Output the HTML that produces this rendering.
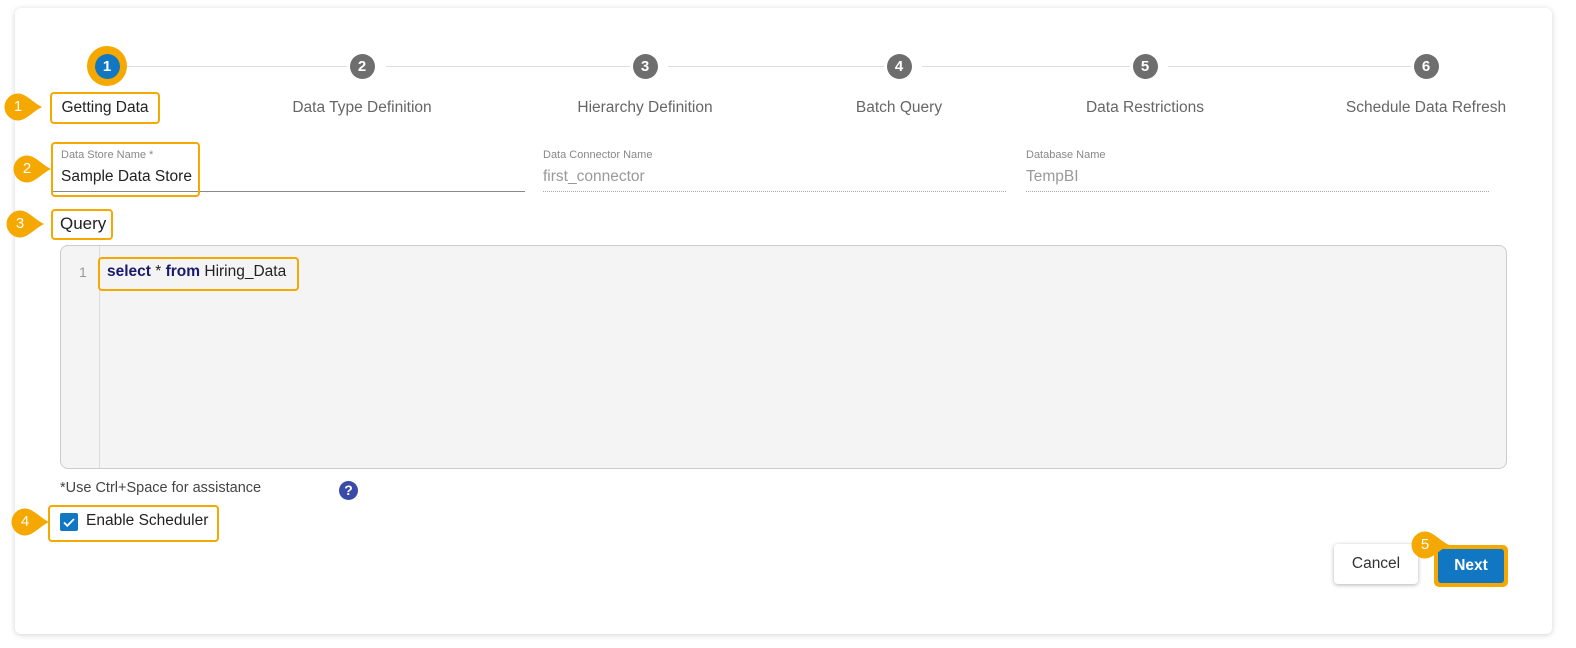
<!DOCTYPE html>
<html><head><style>
*{box-sizing:border-box;margin:0;padding:0}
body{width:1576px;height:648px;background:#fff;font-family:"Liberation Sans",sans-serif;position:relative;overflow:hidden;color:#333}
.card{position:absolute;left:15px;top:8px;width:1537px;height:626px;background:#fff;border-radius:6px;box-shadow:0 1px 6px rgba(0,0,0,.18)}
.a{position:absolute}
.circ{position:absolute;width:25px;height:25px;border-radius:50%;background:#6e6e6e;color:#fff;font-size:15px;font-weight:bold;text-align:center;line-height:25px}
.line{position:absolute;height:1px;background:#ddd;top:66px}
.lbl{position:absolute;top:99px;font-size:15.5px;color:#666;transform:translateX(-50%);white-space:nowrap}
.ob{position:absolute;border:2px solid #f5a800;border-radius:4px}
.bd{position:absolute;width:44px;height:28px}
.bt{position:absolute;width:28px;height:28px;color:#fff;font-size:15px;text-align:center;line-height:28px}
.fl{position:absolute;font-size:11px;color:#888}
.fv{position:absolute;font-size:15.5px}
</style></head><body>
<div class="card"></div>

<div class="line" style="left:122px;width:225px"></div>
<div class="line" style="left:386px;width:244px"></div>
<div class="line" style="left:668px;width:216px"></div>
<div class="line" style="left:922px;width:208px"></div>
<div class="line" style="left:1168px;width:243px"></div>

<div class="a" style="left:87px;top:46px;width:40px;height:40px;border-radius:50%;background:#f5a800"></div>
<div class="circ" style="left:94.5px;top:53.5px;background:#1277c3">1</div>
<div class="circ" style="left:349.5px;top:53.5px">2</div>
<div class="circ" style="left:632.5px;top:53.5px">3</div>
<div class="circ" style="left:886.5px;top:53.5px">4</div>
<div class="circ" style="left:1132.5px;top:53.5px">5</div>
<div class="circ" style="left:1413.5px;top:53.5px">6</div>

<div class="lbl" style="left:105px;color:#222">Getting Data</div>
<div class="lbl" style="left:362px">Data Type Definition</div>
<div class="lbl" style="left:645px">Hierarchy Definition</div>
<div class="lbl" style="left:899px">Batch Query</div>
<div class="lbl" style="left:1145px">Data Restrictions</div>
<div class="lbl" style="left:1426px">Schedule Data Refresh</div>
<div class="ob" style="left:50px;top:92px;width:110px;height:32px"></div>

<div class="fl" style="left:61px;top:149px">Data Store Name *</div>
<div class="fv" style="left:61px;top:168px;color:#222">Sample Data Store</div>
<div class="a" style="left:52px;top:191px;width:473px;height:1px;background:#888"></div>
<div class="ob" style="left:51px;top:142px;width:149px;height:55px"></div>

<div class="fl" style="left:543px;top:149px">Data Connector Name</div>
<div class="fv" style="left:543px;top:168px;color:#999">first_connector</div>
<div class="a" style="left:543px;top:191px;width:463px;border-top:1px dotted #aaa"></div>

<div class="fl" style="left:1026px;top:149px">Database Name</div>
<div class="fv" style="left:1026px;top:168px;color:#999">TempBI</div>
<div class="a" style="left:1026px;top:191px;width:463px;border-top:1px dotted #aaa"></div>

<div class="a" style="left:60px;top:214px;font-size:17px;color:#222">Query</div>
<div class="ob" style="left:51px;top:209px;width:62px;height:31px"></div>

<div class="a" style="left:60px;top:245px;width:1447px;height:224px;background:#f4f4f4;border:1px solid #ccc;border-radius:8px"></div>
<div class="a" style="left:99px;top:246px;width:1px;height:222px;background:#ddd"></div>
<div class="a" style="left:79px;top:264px;font-size:14px;color:#999">1</div>
<div class="a" style="left:107px;top:263px;font-size:15.5px;color:#222"><b style="color:#1a1a6e">select</b> * <b style="color:#1a1a6e">from</b> Hiring_Data</div>
<div class="ob" style="left:98px;top:257px;width:201px;height:34px"></div>

<div class="a" style="left:60px;top:480px;font-size:14.5px;color:#444">*Use Ctrl+Space for assistance</div>
<div class="a" style="left:339px;top:481px;width:19px;height:19px;border-radius:50%;background:#3a4aa8;color:#fff;font-size:14px;font-weight:bold;text-align:center;line-height:19px">?</div>

<div class="a" style="left:60px;top:513px;width:18px;height:18px;background:#1277c3;border-radius:2px"></div>
<svg class="a" style="left:60px;top:513px" width="18" height="18"><path d="M4 9.5l3.3 3.3L14 6" stroke="#fff" stroke-width="1.8" fill="none"/></svg>
<div class="a" style="left:86px;top:512px;font-size:15.5px;color:#222">Enable Scheduler</div>
<div class="ob" style="left:48px;top:505px;width:171px;height:37px"></div>

<div class="a" style="left:1334px;top:544px;width:84px;height:40px;background:#fff;border-radius:4px;box-shadow:0 1px 4px rgba(0,0,0,.3);font-size:15.5px;text-align:center;line-height:40px;color:#333">Cancel</div>
<div class="a" style="left:1434px;top:545px;width:74px;height:42px;background:#f5a800;border-radius:5px"></div>
<div class="a" style="left:1438px;top:549px;width:66px;height:34px;background:#1277c3;border-radius:3px;color:#fff;font-size:15.5px;font-weight:bold;text-align:center;line-height:34px">Next</div>

<svg width="0" height="0" style="position:absolute"><defs><path id="td" d="M14 0.5A13.5 13.5 0 1 0 14 27.5C22 27.5 28 19 38 14C28 9 22 0.5 14 0.5Z" fill="#f5a800"/></defs></svg>
<svg class="bd" style="left:4px;top:93px"><use href="#td"/></svg><div class="bt" style="left:4px;top:93px">1</div>
<svg class="bd" style="left:13px;top:155px"><use href="#td"/></svg><div class="bt" style="left:13px;top:155px">2</div>
<svg class="bd" style="left:6px;top:210px"><use href="#td"/></svg><div class="bt" style="left:6px;top:210px">3</div>
<svg class="bd" style="left:11px;top:508px"><use href="#td"/></svg><div class="bt" style="left:11px;top:508px">4</div>
<svg class="bd" style="left:1411px;top:531px"><use href="#td"/></svg><div class="bt" style="left:1411px;top:531px">5</div>
</body></html>
